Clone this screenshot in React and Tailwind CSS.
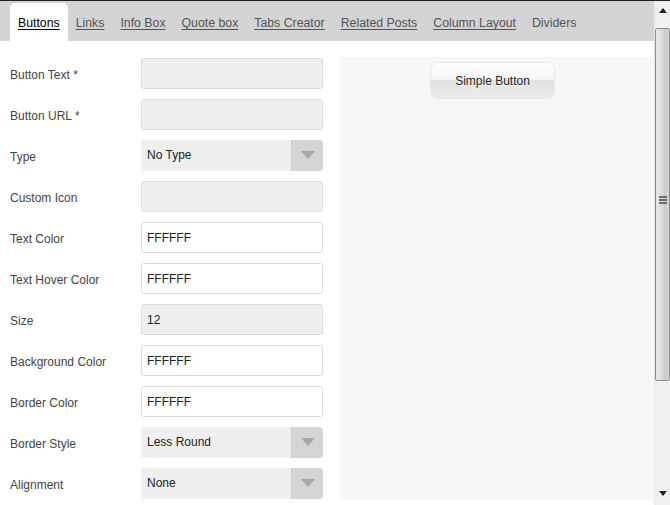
const tabs = ["Buttons", "Links", "Info Box", "Quote box", "Tabs Creator", "Related Posts", "Column Layout", "Dividers"];

const fields = [
  { label: "Button Text *", kind: "empty" },
  { label: "Button URL *", kind: "empty" },
  { label: "Type", kind: "select", value: "No Type" },
  { label: "Custom Icon", kind: "empty" },
  { label: "Text Color", kind: "white", value: "FFFFFF" },
  { label: "Text Hover Color", kind: "white", value: "FFFFFF" },
  { label: "Size", kind: "empty", value: "12" },
  { label: "Background Color", kind: "white", value: "FFFFFF" },
  { label: "Border Color", kind: "white", value: "FFFFFF" },
  { label: "Border Style", kind: "select", value: "Less Round" },
  { label: "Alignment", kind: "select", value: "None" },
];

const Field = ({ f }) => {
  if (f.kind === "select") {
    return (
      <div className="w-[182px] h-[31px] flex bg-[#efefef] rounded-r-[4px] -mt-[1px]">
        <div className="flex-1 flex items-center pl-[6px] text-[12px] text-[#222]">{f.value}</div>
        <div className="w-[32px] h-full bg-[#d5d5d5] border-l border-[#c9c9c9] rounded-r-[4px] flex items-center justify-center">
          <svg width="14" height="8" viewBox="0 0 14 8">
            <path d="M0 0 H14 L7 8 Z" fill="#a8a8a8" />
          </svg>
        </div>
      </div>
    );
  }
  const bg = f.kind === "white" ? "bg-white" : "bg-[#efefef]";
  return (
    <div className={`w-[182px] h-[31px] ${bg} border border-[#dcdcdc] rounded-[3px] flex items-center pl-[5px] text-[12px] text-[#222]`}>
      {f.value}
    </div>
  );
};

const Scrollbar = () => (
  <div className="w-[16px] h-full flex flex-col bg-[#f0f0f0] border-l border-[#e6e6e6]">
    <div className="h-[27px] flex items-start justify-center pt-[7px]">
      <svg width="8" height="5" viewBox="0 0 8 5">
        <path d="M4 0 L8 5 H0 Z" fill="#222" />
      </svg>
    </div>
    <div className="h-[353px] border border-[#8e8e8e] rounded-[2px] bg-[linear-gradient(to_right,#e9e9e9,#dcdcdc_45%,#c9c9c9_70%,#d6d6d6)] flex items-center justify-center">
      <div className="flex flex-col gap-[1px] mt-[-9px]">
        <div className="w-[8px] h-[2px] bg-[#6f6f6f]" />
        <div className="w-[8px] h-[2px] bg-[#6f6f6f]" />
        <div className="w-[8px] h-[2px] bg-[#6f6f6f]" />
      </div>
    </div>
    <div className="flex-1 flex items-end justify-center pb-[9px]">
      <svg width="8" height="5" viewBox="0 0 8 5">
        <path d="M0 0 H8 L4 5 Z" fill="#222" />
      </svg>
    </div>
  </div>
);

export default function App() {
  return (
    <div className="w-[670px] h-[505px] overflow-hidden bg-white flex flex-col font-['Liberation_Sans',Arial,sans-serif]">
      <div className="h-[1px] bg-[#1e1e1e]" />
      <div className="flex-1 flex min-h-0">
        <div className="w-[654px] flex flex-col">
          <div className="h-[40px] bg-[#d4d4d4] flex items-end pl-[10px]">
            {tabs.map((t, i) => (
              <div
                key={t}
                className={`h-[38px] px-[8px] flex items-center pt-[3px] text-[12.3px] ${
                  i === 0 ? "bg-white rounded-t-[5px] text-[#000]" : "text-[#555]"
                }`}
              >
                <span className={i === tabs.length - 1 ? "" : "underline underline-offset-[2px]"}>{t}</span>
              </div>
            ))}
          </div>
          <div className="flex-1 flex">
            <div className="pl-[10px] pt-[17px] flex flex-col gap-[10px]">
              {fields.map((f) => (
                <div key={f.label} className="h-[31px] flex items-center">
                  <div className="w-[131px] text-[12px] text-[#444] pt-[2px]">{f.label}</div>
                  <Field f={f} />
                </div>
              ))}
            </div>
            <div className="ml-[17px] mt-[16px] w-[314px] h-[443px] bg-[#f7f7f7] flex justify-start pl-[90px]">
              <div className="mt-[5px] w-[125px] h-[37px] rounded-[8px] border border-[#e8e8e8] bg-[linear-gradient(to_bottom,#ffffff_0%,#f4f4f4_50%,#e2e2e2_50%,#ececec_100%)] flex items-center justify-center text-[12px] text-[#222] [text-shadow:0_1px_0_#ffffff]">
                Simple Button
              </div>
            </div>
          </div>
        </div>
        <Scrollbar />
      </div>
    </div>
  );
}
